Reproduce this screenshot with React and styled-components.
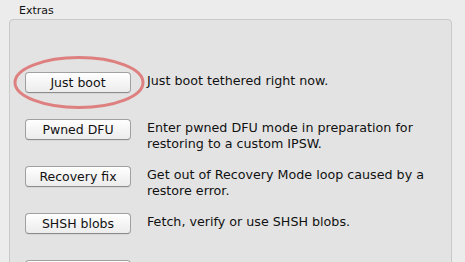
import React from 'react';
import styled, { createGlobalStyle } from 'styled-components';

const Global = createGlobalStyle`
  html, body {
    margin: 0;
    padding: 0;
    background: #ececec;
    overflow: hidden;
  }
  body {
    font-family: "DejaVu Sans", "Liberation Sans", sans-serif;
    color: #111;
  }
`;

const Window = styled.div`
  width: 465px;
  height: 262px;
  overflow: hidden;
  background: #ececec;
`;

const Legend = styled.div`
  font-size: 11px;
  padding: 4px 0 0 19px;
  height: 15px;
`;

const Box = styled.div`
  margin-left: 9px;
  width: 443px;
  height: 300px;
  background: #e3e3e3;
  border: 1px solid #c9c9c9;
  border-radius: 4px;
  padding: 52px 0 0 15px;
  box-sizing: border-box;
  display: grid;
  grid-auto-rows: 47px;
`;

const Row = styled.div`
  position: relative;
  display: flex;
  align-items: flex-start;
  gap: 16px;
`;

const Button = styled.button`
  width: 106px;
  height: 21px;
  flex-shrink: 0;
  font-family: "DejaVu Sans", "Liberation Sans", sans-serif;
  font-size: 12.5px;
  color: #111;
  background: linear-gradient(#ffffff, #f5f5f5 50%, #ececec);
  border: 1px solid #a0a0a0;
  border-bottom-color: #8c8c8c;
  border-radius: 4px;
  padding: 0;
  line-height: 19px;
  box-shadow: 0 1px 0 rgba(0, 0, 0, 0.05);
`;

const Desc = styled.div`
  font-size: 12.7px;
  line-height: 15.5px;
  margin-top: 1px;
  width: 290px;
`;

const Ring = styled.svg`
  position: absolute;
  left: -13px;
  top: -17px;
  pointer-events: none;
`;

const items = [
  { label: 'Just boot', text: 'Just boot tethered right now.', ring: true },
  { label: 'Pwned DFU', text: 'Enter pwned DFU mode in preparation for restoring to a custom IPSW.' },
  { label: 'Recovery fix', text: 'Get out of Recovery Mode loop caused by a restore error.' },
  { label: 'SHSH blobs', text: 'Fetch, verify or use SHSH blobs.' },
  { label: '', text: '' },
];

export default function App() {
  return (
    <Window>
      <Global />
      <Legend>Extras</Legend>
      <Box>
        {items.map((it, i) => (
          <Row key={i}>
            <Button type="button">{it.label}</Button>
            <Desc>{it.text}</Desc>
            {it.ring && (
              <Ring width="134" height="55" viewBox="0 0 134 55">
                <ellipse cx="67" cy="27.5" rx="64" ry="25" fill="none" stroke="#de7474" strokeWidth="3" opacity="0.9" />
              </Ring>
            )}
          </Row>
        ))}
      </Box>
    </Window>
  );
}
